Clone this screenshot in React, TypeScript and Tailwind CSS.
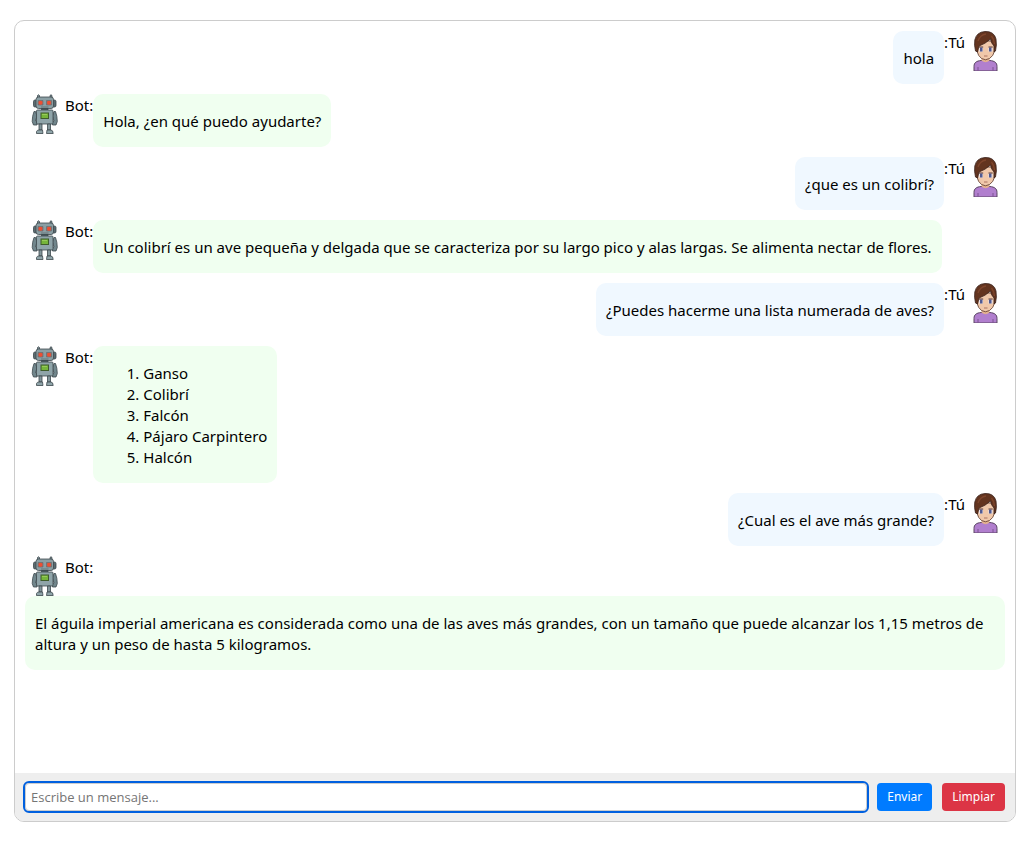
import type { ReactNode } from "react";

function UserAvatar() {
  return (
    <svg viewBox="0 0 40 40" className="size-10 shrink-0" role="img" aria-label="Usuario">
      <path d="M9 40V35.500C9 31.500 11.500 30 16 29.500H25C29.500 30 32 31.500 32 35.500V40Z" fill="#b17fce" stroke="#5a4663" strokeWidth="1" />
      <path d="M13 36V40M28 36V40" stroke="#7c5592" strokeWidth="1" />
      <path d="M16.500 29.500Q20.500 33 24.500 29.500V26H16.500Z" fill="#e3b08f" />
      <path d="M12 10H29.500V20Q28.500 25 24.500 27.500Q20.500 30 16.500 27.500Q13 25 12 20Z" fill="#f0c8aa" stroke="#5b382b" strokeWidth=".8" />
      <path d="M10.500 20Q9 14 9.800 9Q11.500 1 20 .5Q29 0 31 8Q32 14 30.500 20L29 21V15Q26 12 25.500 8Q20 13 14 15L12.500 21Z" fill="#63341f" stroke="#38211a" strokeWidth=".8" />
      <path d="M13 10Q15 4 21 3M26.500 5Q29 8 29.500 13" fill="none" stroke="#7e452c" strokeWidth="1.300" />
      <path d="M14 16H18.200M23.500 16H27.700" stroke="#4a3030" strokeWidth=".9" />
      <path d="M14 17H18V20.500H14ZM23.500 17H27.500V20.500H23.500Z" fill="#e9e3ea" />
      <path d="M15 16.500H17.500V20.500H15ZM24 16.500H26.500V20.500H24Z" fill="#505a91" />
      <path d="M19 25H22.500" stroke="#a46b59" strokeWidth=".9" />
    </svg>
  );
}

function BotAvatar() {
  return (
    <svg viewBox="0 0 40 40" className="size-10 shrink-0" role="img" aria-label="Robot">
      <g stroke="#3c484c" strokeWidth=".8">
        <path d="M12.500 4V1.500Q13.500 0 14.500 1.500V4M25 4V1.500Q26 0 27 1.500V4" fill="#82959a" />
        <rect x="8.500" y="6" width="3.500" height="7" rx="1.500" fill="#5b6b70" />
        <rect x="27.500" y="6" width="3.500" height="7" rx="1.500" fill="#5b6b70" />
        <rect x="11" y="3" width="17.500" height="11.500" rx="2.500" fill="#8b9fa4" />
        <path d="M16.500 14.500H23V16.500H16.500Z" fill="#4f6064" />
        <path d="M10.500 17.500H9Q7.200 22 7.200 27.500L8.500 31H12V28L10.500 27L12 22ZM29 17.500H30.500Q32.300 22 32.300 27.500L31 31H27.500V28L29 27L27.500 22Z" fill="#71868c" />
        <rect x="11.500" y="16" width="16.500" height="14" rx="1" fill="#8fa4a9" />
        <path d="M14 30H17V36H14ZM22.500 30H25.500V36H22.500Z" fill="#82969b" />
        <path d="M11.500 39.500V37.500Q12 36 14 36H17.500L18 39.500ZM21.500 39.500L22 36H26Q28 36 28.200 39.500Z" fill="#8fa4a9" />
      </g>
      <path d="M13 6.500H18V11H13ZM21.500 6.500H26.500V11H21.500Z" fill="#9b6e69" stroke="#62696b" strokeWidth=".6" />
      <circle cx="15.500" cy="8.800" r="2" fill="#ee4e32" />
      <circle cx="24" cy="8.800" r="2" fill="#ee4e32" />
      <path d="M16 13H23.500" stroke="#5d6c70" strokeWidth=".8" />
      <rect x="16" y="19" width="7.500" height="5.500" fill="#76b53a" stroke="#3f5d2b" strokeWidth="1" />
      <path d="M17 20.500H22" stroke="#97cb59" strokeWidth="1" />
    </svg>
  );
}

function UserMessage({ children }: { children: ReactNode }) {
  return (
    <div className="flex flex-row-reverse flex-wrap items-start">
      <UserAvatar />
      <span className="pt-px">:Tú</span>
      <div className="rounded-[10px] bg-[#f0f8ff] px-2.5 pt-[17px] pb-[15px]">{children}</div>
    </div>
  );
}

function BotMessage({ children }: { children: ReactNode }) {
  return (
    <div className="flex flex-wrap items-start">
      <BotAvatar />
      <span className="pt-px">Bot:</span>
      <div className="rounded-[10px] bg-[#f0fff0] px-2.5 pt-[17px] pb-[15px]">{children}</div>
    </div>
  );
}

const birds = ["Ganso", "Colibrí", "Falcón", "Pájaro Carpintero", "Halcón"];

export default function App() {
  return (
    <main className="flex min-h-screen flex-col bg-white pt-5 pr-[18px] pb-[23px] pl-3.5 font-['Noto_Sans','Open_Sans',sans-serif] text-[15px] leading-[21px] text-black">
      <section className="flex flex-1 flex-col overflow-hidden rounded-[10px] border border-[#ccc]">
        <div className="flex flex-1 flex-col gap-2.5 p-2.5">
          <UserMessage>hola</UserMessage>
          <BotMessage>Hola, ¿en qué puedo ayudarte?</BotMessage>
          <UserMessage>¿que es un colibrí?</UserMessage>
          <BotMessage>
            Un colibrí es un ave pequeña y delgada que se caracteriza por su largo pico y alas largas. Se alimenta nectar de flores.
          </BotMessage>
          <UserMessage>¿Puedes hacerme una lista numerada de aves?</UserMessage>
          <BotMessage>
            <ol className="list-decimal pl-10">
              {birds.map((bird) => (
                <li key={bird}>{bird}</li>
              ))}
            </ol>
          </BotMessage>
          <UserMessage>¿Cual es el ave más grande?</UserMessage>
          <BotMessage>
            El águila imperial americana es considerada como una de las aves más grandes, con un tamaño que puede alcanzar los 1,15 metros de altura y un peso de hasta 5 kilogramos.
          </BotMessage>
        </div>
        <form className="flex gap-2.5 bg-[#eee] p-2.5 text-[12px] leading-4" onSubmit={(e) => e.preventDefault()}>
          <input
            type="text"
            autoFocus
            aria-label="Mensaje"
            placeholder="Escribe un mensaje..."
            className="min-w-0 flex-1 rounded-[4px] border border-[#ccc] bg-white px-[5px] py-1 font-['Open_Sans','Noto_Sans',sans-serif] text-[13px] leading-[18px] caret-black outline-2 outline-[#0060df] placeholder:text-[#757575]"
          />
          <button type="submit" className="rounded-[4px] bg-[#007bff] px-2.5 py-1.5 text-white">Enviar</button>
          <button type="button" className="rounded-[4px] bg-[#dc3545] px-2.5 py-1.5 text-white">Limpiar</button>
        </form>
      </section>
    </main>
  );
}
